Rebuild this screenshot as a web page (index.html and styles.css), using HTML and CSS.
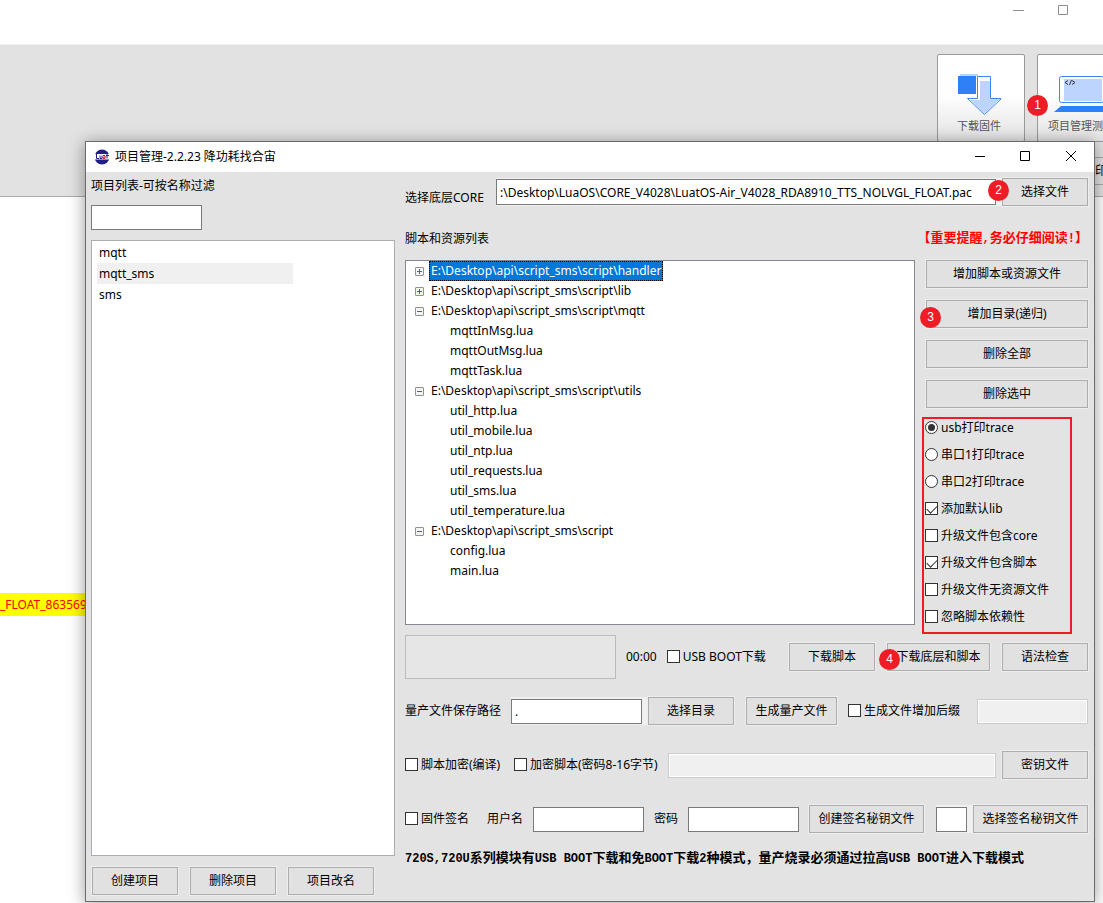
FILE: index.html
```html
<!DOCTYPE html>
<html lang="zh-CN">
<head>
<meta charset="utf-8">
<title>项目管理-2.2.23</title>
<link rel="stylesheet" href="styles.css">
</head>
<body>
<div class="app">
  <header class="app-title">
    <svg class="app-controls" width="60" height="12" viewBox="0 0 60 12" fill="none" stroke="#8e8e8e"><path d="M0 5.5h11M45.5 .5h9v9h-9z"/></svg>
  </header>
  <div class="toolbar">
    <button class="tool" type="button">
      <svg width="44" height="44" viewBox="0 0 44 44">
        <path fill="#b9d3ff" d="M3 0h18v2H3z"/>
        <path fill="#2f80f7" d="M1 2h18v18H1z"/>
        <path fill="#fff" stroke="#3d87f5" d="M20.500 2.500h13v22h11L27.500 40.500 10.500 24.500h10z"/>
        <path fill="#bcd4ff" d="M23 7h10v18h10L27.500 39.500 13 26h10z"/>
      </svg>
      <span>下载固件</span>
    </button>
    <button class="tool tool-cut" type="button">
      <svg width="60" height="44" viewBox="0 0 60 44">
        <rect x="8.500" y="2.500" width="44" height="26" rx="2" fill="#fff" stroke="#3d87f5"/>
        <path fill="#bcd4ff" d="M13 5h38v22H13z"/>
        <path fill="none" stroke="#333" d="M17 6.500l-3 2 3 2M18.500 11l2-5M21 6.500l3 2-3 2"/>
        <path fill="#2f80f7" d="M10 32h42l9 6H3z"/>
      </svg>
      <span>项目管理测试</span>
      <b class="badge badge-test">1</b>
    </button>
  </div>
  <div class="print-row"><button class="print" type="button">打印</button></div>
  <div class="log"><p class="log-line">_FLOAT_863569</p></div>
</div>

<section class="dialog">
  <header class="titlebar">
    <svg class="logo" width="16" height="16" viewBox="0 0 16 16">
      <circle cx="8" cy="8" r="7.500" fill="#20208c"/>
      <path fill="#fff" d="M0 5h16v5.500H0z"/>
      <g fill="none" stroke="#20208c"><path d="M2.500 5v4.500H5M6 6.500v3h2v-3M13 5v4.500M12 6.500h3"/><path stroke="#e0202c" d="M9 6.500h2v3H9V8h2"/></g>
    </svg>
    <h1>项目管理-2.2.23 降功耗找合宙</h1>
    <div class="controls">
      <button type="button" aria-label="最小化"><svg width="12" height="12" viewBox="0 0 12 12"><path d="M2 5.500h10"/></svg></button>
      <button type="button" aria-label="最大化"><svg width="12" height="12" viewBox="0 0 12 12"><path d="M1.500 .5h9v9h-9z"/></svg></button>
      <button type="button" aria-label="关闭"><svg width="12" height="12" viewBox="0 0 12 12"><path d="M1 0l10 10M11 0L1 10"/></svg></button>
    </div>
  </header>
  <div class="content">
    <aside class="projects">
      <label class="filter-label" for="filter">项目列表-可按名称过滤</label>
      <input class="field" id="filter" type="text">
      <ul class="project-list">
        <li>mqtt</li>
        <li class="current">mqtt_sms</li>
        <li>sms</li>
      </ul>
      <div class="project-actions">
        <button class="btn" type="button">创建项目</button>
        <button class="btn" type="button">删除项目</button>
        <button class="btn" type="button">项目改名</button>
      </div>
    </aside>

    <main class="main">
      <div class="core-row">
        <label class="core-label" for="core">选择底层CORE</label>
        <div class="strip grow">
          <input class="field grow" id="core" type="text" value=":\Desktop\LuaOS\CORE_V4028\LuatOS-Air_V4028_RDA8910_TTS_NOLVGL_FLOAT.pac">
          <button class="btn" type="button">选择文件<b class="badge badge-file">2</b></button>
        </div>
      </div>

      <div class="heading-row">
        <span>脚本和资源列表</span>
        <strong class="warning">【重要提醒<span class="mono">,</span>务必仔细阅读<span class="mono">!</span>】</strong>
      </div>

      <div class="work">
        <ul class="tree">
          <li><button class="toggle plus" type="button" aria-label="展开"></button><span class="node selected">E:\Desktop\api\script_sms\script\handler</span></li>
          <li><button class="toggle plus" type="button" aria-label="展开"></button><span class="node">E:\Desktop\api\script_sms\script\lib</span></li>
          <li><button class="toggle" type="button" aria-label="折叠"></button><span class="node">E:\Desktop\api\script_sms\script\mqtt</span></li>
          <li class="leaf">mqttInMsg.lua</li>
          <li class="leaf">mqttOutMsg.lua</li>
          <li class="leaf">mqttTask.lua</li>
          <li><button class="toggle" type="button" aria-label="折叠"></button><span class="node">E:\Desktop\api\script_sms\script\utils</span></li>
          <li class="leaf">util_http.lua</li>
          <li class="leaf">util_mobile.lua</li>
          <li class="leaf">util_ntp.lua</li>
          <li class="leaf">util_requests.lua</li>
          <li class="leaf">util_sms.lua</li>
          <li class="leaf">util_temperature.lua</li>
          <li><button class="toggle" type="button" aria-label="折叠"></button><span class="node">E:\Desktop\api\script_sms\script</span></li>
          <li class="leaf">config.lua</li>
          <li class="leaf">main.lua</li>
        </ul>
        <div class="side">
          <div class="side-actions">
            <button class="btn" type="button">增加脚本或资源文件</button>
            <button class="btn" type="button">增加目录(递归)<b class="badge badge-dir">3</b></button>
            <button class="btn" type="button">删除全部</button>
            <button class="btn" type="button">删除选中</button>
          </div>
          <div class="options">
            <label class="check"><input type="radio" name="trace" checked>usb打印trace</label>
            <label class="check"><input type="radio" name="trace">串口1打印trace</label>
            <label class="check"><input type="radio" name="trace">串口2打印trace</label>
            <label class="check"><input type="checkbox" checked>添加默认lib</label>
            <label class="check"><input type="checkbox">升级文件包含core</label>
            <label class="check"><input type="checkbox" checked>升级文件包含脚本</label>
            <label class="check"><input type="checkbox">升级文件无资源文件</label>
            <label class="check"><input type="checkbox">忽略脚本依赖性</label>
          </div>
        </div>
      </div>

      <div class="row download-row">
        <div class="progress"></div>
        <span>00:00</span>
        <label class="check"><input type="checkbox">USB BOOT下载</label>
        <div class="download-actions">
          <button class="btn" type="button">下载脚本</button>
          <button class="btn medium" type="button">下载底层和脚本<b class="badge badge-download">4</b></button>
          <button class="btn" type="button">语法检查</button>
        </div>
      </div>

      <div class="row">
        <label for="path">量产文件保存路径</label>
        <div class="strip">
          <input class="field path" id="path" type="text" value=".">
          <button class="btn" type="button">选择目录</button>
        </div>
        <button class="btn fit" type="button">生成量产文件</button>
        <label class="check"><input type="checkbox">生成文件增加后缀</label>
        <input class="field push" type="text" aria-label="后缀" disabled>
      </div>

      <div class="row encrypt-row">
        <label class="check compile">
          <input type="checkbox">脚本加密(编译)</label>
        <label class="check cipher"><input type="checkbox">加密脚本(密码8-16字节)</label>
        <input class="field grow" type="text" aria-label="加密密码" disabled>
        <button class="btn" type="button">密钥文件</button>
      </div>

      <div class="row">
        <label class="check sign"><input type="checkbox">固件签名</label>
        <label for="user">用户名</label>
        <input class="field" id="user" type="text">
        <label for="pass">密码</label>
        <input class="field" id="pass" type="text">
        <button class="btn wide" type="button">创建签名秘钥文件</button>
        <div class="strip push">
          <input class="field short" type="text" aria-label="签名秘钥">
          <button class="btn wide" type="button">选择签名秘钥文件</button>
        </div>
      </div>

      <p class="note"><span class="mono">720S,720U</span>系列模块有<span class="mono">USB BOOT</span>下载和免<span class="mono">BOOT</span>下载<span class="mono">2</span>种模式，量产烧录必须通过拉高<span class="mono">USB BOOT</span>进入下载模式</p>
    </main>
  </div>
</section>
</body>
</html>
```
FILE: styles.css
```css
* { box-sizing: border-box; }

body {
  margin: 0;
  min-height: 100vh;
  position: relative;
  overflow: hidden;
  background: #fff;
  color: #000;
  font: 12px/16px "Noto Sans", "Noto Sans CJK SC", sans-serif;
}

button, input { font: inherit; color: inherit; }
button { padding: 0; }
ul, p, h1 { margin: 0; padding: 0; list-style: none; font: inherit; }

/* Background application */
.app { display: flex; flex-direction: column; height: 100vh; background: #e2e2e2; }
.app-title { display: flex; justify-content: flex-end; height: 45px; padding: 5px 30px 0 0; background: #fff; border-bottom: 1px solid #f0f0f0; }
.toolbar { display: flex; justify-content: flex-end; gap: 12px; padding-top: 9px; height: 112px; }
.tool {
  position: relative;
  display: flex; flex-direction: column; align-items: center;
  width: 88px; height: 88px; padding: 19px 4px 0 0;
  border: 1px solid #999; border-radius: 2px;
  background: linear-gradient(#fff 45%, #e4e4e4);
  color: #555; font-size: 11px;
}
.tool-cut { margin-right: -22px; padding-right: 0; flex: none; }
.print-row { display: flex; justify-content: flex-end; height: 39px; }
.print { width: 42px; height: 28px; margin-right: -14px; padding-right: 2px; border: 1px solid #aaa; background: #e2e2e2; flex: none; }
.log { flex: 1; border-top: 1px solid #aaa; padding-top: 396px; background: #fff; }
.log-line { height: 23px; line-height: 23px; background: #ff0; color: #f00; width: 90px; }

/* Project dialog */
.dialog {
  position: absolute; left: 85px; right: 8px; top: 141px;
  border: 1px solid #6b6b6b;
  background: #e3e3e3;
  box-shadow: 0 2px 16px rgba(0, 0, 0, .4);
}
.titlebar { display: flex; align-items: center; height: 30px; padding-left: 8px; gap: 5px; background: #fff; }
.controls { display: flex; margin-left: auto; }
.controls button { display: grid; place-items: center; width: 46px; height: 30px; border: 0; background: none; }
.controls path { fill: none; stroke: #000; }

.content { display: grid; grid-template-columns: 304px minmax(0, 1fr); gap: 10px; padding: 0 6px 0 5px; }
.projects { display: flex; flex-direction: column; align-items: flex-start; padding-bottom: 6px; }
.filter-label { height: 33px; padding-top: 6px; }
.project-list { flex: 1; align-self: stretch; margin: 10px 0 11px; padding: 1px 5px; border: 1px solid #abadb3; background: #fff; }
.project-list li { width: 196px; padding-left: 2px; line-height: 21px; }
.project-list .current { background: #f0f0f0; }
.project-actions { display: flex; gap: 12px; padding-left: 1px; }

.field { width: 111px; height: 25px; padding: 0 3px; border: 1px solid #7a7a7a; border-radius: 0; background: #fff; outline: 0; }
.field:disabled { border-color: #ccc; background: #f0f0f0; box-shadow: inset 0 0 0 1px #fff; }
.field.path { width: 131px; }
.field.short { width: 31px; }
.field.grow, .grow { flex: 1; min-width: 0; }

.btn {
  position: relative; flex: none;
  width: 86px; height: 28px;
  border: 1px solid #adadad; border-radius: 0;
  background: #e1e1e1; box-shadow: 0 0 0 1px #eee;
  white-space: nowrap;
}
.btn.fit { width: 91px; margin: 0 1px 0 2px; }
.btn.medium { width: 103px; }
.btn.wide { width: 115px; }

.strip { display: flex; align-items: center; gap: 6px; background: #f0f0f0; }
.push { margin-left: auto; }

.core-row { display: flex; gap: 10px; padding-top: 6px; }
.core-row .field { height: 26px; }
.core-label { align-self: flex-end; min-width: 81px; }
.heading-row { display: flex; align-items: center; justify-content: space-between; height: 54px; padding-top: 12px; }
.warning { padding-bottom: 2px; color: #f00; }
.warning, .note { font: bold 13px/16px "Noto Sans CJK SC", sans-serif; }
.mono { font: bold 12px/16px "Liberation Mono", monospace; }

.work { display: flex; gap: 7px; }
.tree { flex: 1; margin-bottom: 9px; border: 1px solid #828790; background: #fff; }
.tree li { display: flex; align-items: center; height: 20px; padding-left: 9px; gap: 5px; }
.tree .leaf { padding-left: 44px; }
.node { height: 20px; padding: 0 1px; border: 1px solid transparent; line-height: 18px; }
.selected { border: 1px dotted #000; background: #0078d7; color: #fff; }
.toggle {
  width: 9px; height: 9px; border: 1px solid #919191; border-radius: 1px;
  background: linear-gradient(#4b63a7, #4b63a7) center / 5px 1px no-repeat, #f4f4f4;
}
.toggle.plus {
  background: linear-gradient(#4b63a7, #4b63a7) center / 5px 1px no-repeat, linear-gradient(#4b63a7, #4b63a7) center / 1px 5px no-repeat, #f4f4f4;
}

.side { width: 166px; }
.side-actions { display: flex; flex-direction: column; gap: 12px; padding: 0 0 9px 4px; }
.side-actions .btn { width: auto; }
.options { display: flex; flex-direction: column; gap: 9px; width: 150px; padding: 0 0 6px 1px; border: 2px solid #ee1c25; }
.options .check { height: 18px; }

.check { display: flex; align-items: center; gap: 3px; white-space: nowrap; }
.check input { appearance: none; flex: none; width: 13px; height: 13px; margin: 0 0 1px; border: 1px solid #333; background: #fff; display: grid; place-items: center; }
.check input[type="radio"] { border-radius: 50%; }
.check input[type="radio"]:checked::before { content: ""; width: 7px; height: 7px; border-radius: 50%; background: #333; }
.check input[type="checkbox"]:checked::before { content: ""; width: 9px; height: 5px; border: solid #333; border-width: 0 0 1px 1px; transform: translateY(-1px) rotate(-45deg); }

.row { display: flex; align-items: center; gap: 10px; height: 54px; white-space: nowrap; }
.download-row { height: 44px; margin: 1px 0 5px; }
.download-actions { display: flex; gap: 12px; margin-left: auto; }
.progress { flex: none; width: 211px; height: 44px; border: 1px solid #bcbcbc; background: #e6e6e6; }
.encrypt-row { gap: 6px; }
.compile { width: 103px; }
.cipher { width: 148px; }
.sign { margin-right: 8px; }
.note { height: 55px; padding-top: 3px; white-space: nowrap; }

.badge {
  position: absolute; width: 21px; height: 21px; border-radius: 50%;
  background: #ee1c25; color: #fff;
  font: 12px/21px "Liberation Sans", sans-serif; text-align: center;
}
.badge-test { left: -11px; top: 40px; }
.badge-file { left: -15px; top: 1px; }
.badge-dir { left: -7px; top: 6px; }
.badge-download { left: -9px; top: 5px; }
```
